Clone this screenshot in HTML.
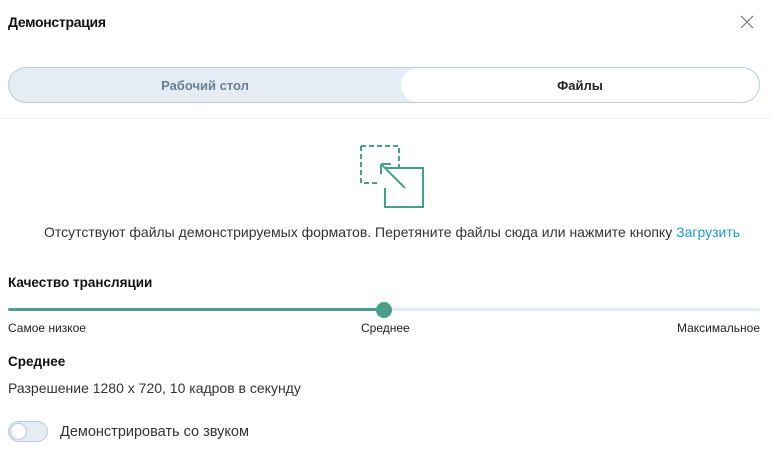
<!DOCTYPE html><html><head><meta charset="utf-8"><style>
body{margin:0;width:772px;height:462px;background:#fff;font-family:"Liberation Sans",sans-serif;color:#222;position:relative;overflow:hidden}
.a{position:absolute;white-space:nowrap}
.n{font-weight:bold}
</style></head><body>
<div class="a n" style="left:8px;top:14px;font-size:14px;color:#111;letter-spacing:-0.3px">Демонстрация</div>
<svg class="a" style="left:740px;top:15px" width="14" height="14"><path d="M1 1L13 13M13 1L1 13" stroke="#777" stroke-width="1.2"/></svg>
<div class="a" style="left:8px;top:67px;width:750px;height:34px;border:1px solid #b9cbdd;border-radius:18px;background:#e5ecf4;overflow:hidden">
<div class="a" style="left:392px;top:0;width:358px;height:34px;background:#fff;border-radius:17px"></div>
<div class="a n" style="left:0;width:392px;text-align:center;top:10px;font-size:13px;color:#6b7f93">Рабочий стол</div>
<div class="a n" style="left:392px;width:358px;text-align:center;top:10px;font-size:13px;color:#222">Файлы</div>
</div>
<div class="a" style="left:0;top:118px;width:772px;height:1px;background:#eee"></div>
<svg class="a" style="left:355px;top:140px" width="75" height="72" fill="none" stroke="#45a08c" stroke-width="2">
<path d="M6 6H44V27" stroke-dasharray="5 3"/><path d="M6 6V43H25" stroke-dasharray="5 3"/>
<path d="M30 28H68V67H30V48"/><path d="M50 48L26 24M26 24V34M26 24H36"/>
</svg>
<div class="a" style="left:0;width:784px;text-align:center;top:224px;font-size:14px;color:#333">Отсутствуют файлы демонстрируемых форматов. Перетяните файлы сюда или нажмите кнопку <span style="color:#1f9bd7">Загрузить</span></div>
<div class="a" style="left:8px;top:275px;font-size:13.5px;font-weight:bold;color:#111">Качество трансляции</div>
<div class="a" style="left:8px;top:308px;width:752px;height:3px;background:#e4ebf2;border-radius:2px"></div>
<div class="a" style="left:8px;top:308px;width:376px;height:3px;background:#4a9e8c;border-radius:2px"></div>
<div class="a" style="left:376px;top:302px;width:16px;height:16px;border-radius:50%;background:#4a9e8c"></div>
<div class="a" style="left:8px;top:321px;font-size:12px;color:#222">Самое низкое</div>
<div class="a" style="left:361px;top:321px;font-size:12px;color:#222">Среднее</div>
<div class="a" style="right:12px;top:321px;font-size:12px;color:#222">Максимальное</div>
<div class="a" style="left:8px;top:354px;font-size:13.5px;font-weight:bold;color:#111">Среднее</div>
<div class="a" style="left:8px;top:380px;font-size:14px;color:#333">Разрешение 1280 x 720, 10 кадров в секунду</div>
<div class="a" style="left:8px;top:421px;width:38px;height:19px;border:1px solid #b9cbdd;border-radius:11px;background:#e5ecf4"></div>
<div class="a" style="left:10px;top:423px;width:15px;height:15px;border-radius:50%;background:#fff;border:1px solid #b9cbdd"></div>
<div class="a" style="left:60px;top:424px;font-size:14.5px;color:#333">Демонстрировать со звуком</div>
</body></html>
